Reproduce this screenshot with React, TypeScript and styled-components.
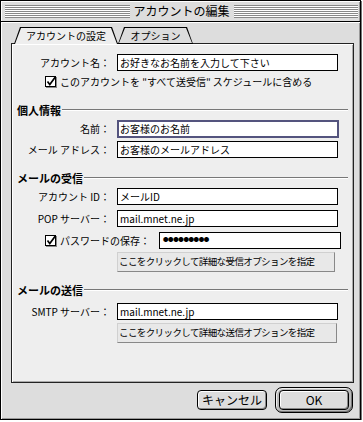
import styled, { createGlobalStyle } from "styled-components";

const GlobalStyle = createGlobalStyle`
  html, body {
    margin: 0;
    padding: 0;
    background: #ffffff;
  }
  body {
    font-family: "Noto Sans CJK JP", "Noto Sans", sans-serif;
    color: #000000;
  }
  * {
    box-sizing: border-box;
  }
`;

function CheckBox() {
    return (
        <svg width="12" height="12" viewBox="0 0 12 12">
            <rect x="1" y="1" width="11" height="11" fill="#888" />
            <rect x="0.5" y="0.5" width="10" height="10" fill="#fff" stroke="#000" />
            <path d="M2.5 5.5 L4.8 8.6 L10.5 0.8" fill="none" stroke="#000" strokeWidth="1.7" />
        </svg>
    );
}

export default function App() {
    return (
        <>
            <GlobalStyle />
            <Window>
                <TitleBar>
                    <Stripes />
                    <Title>アカウントの編集</Title>
                    <Stripes />
                </TitleBar>

                <Body>
                    <TabRow>
                        <Tab $active $w={104}>
                            <TabFace $active>アカウントの設定</TabFace>
                        </Tab>
                        <Tab $w={75}>
                            <TabFace>オプション</TabFace>
                        </Tab>
                    </TabRow>

                    <Panel>
                        <Row $mt={0}>
                            <Label>アカウント名：</Label>
                            <Field $w={221}>お好きなお名前を入力して下さい</Field>
                        </Row>
                        <CheckRow $mt={4}>
                            <CheckBox />
                            <CheckText>このアカウントを "すべて送受信" スケジュールに含める</CheckText>
                        </CheckRow>

                        <Group $mt={16}>
                            <GroupTitle>個人情報</GroupTitle>
                            <GroupLine />
                        </Group>
                        <Row $mt={4}>
                            <Label>名前：</Label>
                            <Field $w={222} $focus>お客様のお名前</Field>
                        </Row>
                        <Row $mt={4}>
                            <Label>メール アドレス：</Label>
                            <Field $w={221}>お客様のメールアドレス</Field>
                        </Row>

                        <Group $mt={14}>
                            <GroupTitle>メールの受信</GroupTitle>
                            <GroupLine />
                        </Group>
                        <Row $mt={4}>
                            <Label>アカウント ID：</Label>
                            <Field $w={221}>メールID</Field>
                        </Row>
                        <Row $mt={5}>
                            <Label>POP サーバー：</Label>
                            <Field $w={221}>mail.mnet.ne.jp</Field>
                        </Row>
                        <CheckRow $mt={5}>
                            <CheckBox />
                            <CheckText $w={96}>パスワードの保存：</CheckText>
                            <Field $w={182}>
                                <Dots>●●●●●●●●●</Dots>
                            </Field>
                        </CheckRow>
                        <OptionButton $mt={3} $w={218}>
                            ここをクリックして詳細な受信オプションを指定
                        </OptionButton>

                        <Group $mt={12}>
                            <GroupTitle>メールの送信</GroupTitle>
                            <GroupLine />
                        </Group>
                        <Row $mt={7}>
                            <Label>SMTP サーバー：</Label>
                            <Field $w={221}>mail.mnet.ne.jp</Field>
                        </Row>
                        <OptionButton $mt={3} $w={220}>
                            ここをクリックして詳細な送信オプションを指定
                        </OptionButton>
                    </Panel>

                    <ButtonRow>
                        <PushButton>キャンセル</PushButton>
                        <DefaultRing>
                            <PushButton>OK</PushButton>
                        </DefaultRing>
                    </ButtonRow>
                </Body>
            </Window>
        </>
    );
}

const Window = styled.div`
    width: 361px;
    height: 420px;
    border: 1px solid #000;
    background: #dddddd;
    box-shadow: 1px 1px 0 #777;
    display: flex;
    flex-direction: column;
`;

const TitleBar = styled.div`
    height: 21px;
    padding: 0 2px 0 4px;
    border-bottom: 1px solid #000;
    background: #dddddd;
    box-shadow: inset 1px 1px 0 #fff, inset -1px 0 0 #999;

    display: flex;
    align-items: center;
    gap: 4px;
`;

const Stripes = styled.div`
    flex: 1;
    height: 13px;
    background: repeating-linear-gradient(to bottom, #888 0 1px, #fff 1px 2px);
`;

const Title = styled.div`
    font-size: 12px;
    line-height: 1;
    white-space: nowrap;
`;

const Body = styled.div`
    flex: 1;
    padding: 5px 6px 5px 10px;
    box-shadow: inset 1px 1px 0 #fff, inset -1px -1px 0 #999;
    display: flex;
    flex-direction: column;
`;

const TabRow = styled.div`
    display: flex;
    padding-left: 3px;
    margin-bottom: -1px;
`;

const tabShape = `polygon(0 100%, 6px 0, calc(100% - 6px) 0, 100% 100%)`;

const Tab = styled.div<{ $active?: boolean; $w: number }>`
    position: relative;
    z-index: ${(p) => (p.$active ? 2 : 1)};
    width: ${(p) => p.$w}px;
    height: 17px;
    padding: ${(p) => (p.$active ? "1px 1px 0" : "1px")};
    background: #000;
    clip-path: ${tabShape};
    display: flex;
`;

const TabFace = styled.div<{ $active?: boolean }>`
    flex: 1;
    background: ${(p) => (p.$active ? "#eeeeee" : "#dcdcdc")};
    clip-path: ${tabShape};

    display: flex;
    align-items: center;
    justify-content: center;

    font-size: 10px;
    line-height: 1;
    white-space: nowrap;
`;

const Panel = styled.div`
    width: 343px;
    height: 340px;
    padding: 10px 5px 0 5px;
    border: 1px solid #222;
    background: #eeeeee;
    box-shadow: inset 1px 1px 0 #fff, inset -1px -1px 0 #aaa;
    display: flex;
    flex-direction: column;
`;

const Row = styled.div<{ $mt: number }>`
    margin-top: ${(p) => p.$mt}px;
    height: 17px;
    display: flex;
    align-items: center;
`;

const Label = styled.div`
    width: 93px;
    margin-right: 7px;
    text-align: right;
    font-size: 10px;
    line-height: 1;
    white-space: nowrap;
`;

const Field = styled.div<{ $w: number; $focus?: boolean }>`
    width: ${(p) => p.$w}px;
    height: ${(p) => (p.$focus ? 18 : 17)}px;
    padding: 0 ${(p) => (p.$focus ? 1 : 2)}px;
    border: ${(p) => (p.$focus ? "2px solid #54547e" : "1px solid #000")};
    background: #fff;

    display: flex;
    align-items: center;

    font-size: 10px;
    line-height: 1;
    white-space: nowrap;
`;

const Dots = styled.span`
    font-size: 5.5px;
    letter-spacing: -0.4px;
    padding-left: 1px;
`;

const CheckRow = styled.div<{ $mt: number }>`
    margin-top: ${(p) => p.$mt}px;
    min-height: 13px;
    padding-left: 28px;
    display: flex;
    align-items: center;
    gap: 3px;
`;

const CheckText = styled.div<{ $w?: number }>`
    width: ${(p) => (p.$w ? `${p.$w}px` : "auto")};
    font-size: 10px;
    line-height: 1;
    white-space: nowrap;
`;

const Group = styled.div<{ $mt: number }>`
    margin-top: ${(p) => p.$mt}px;
    height: 12px;
    display: flex;
    align-items: center;
`;

const GroupTitle = styled.div`
    font-size: 11px;
    font-weight: 700;
    line-height: 1;
    white-space: nowrap;
`;

const GroupLine = styled.div`
    flex: 1;
    margin-left: 1px;
    border-top: 1px solid #777;
    border-bottom: 1px solid #fff;
`;

const OptionButton = styled.div<{ $mt: number; $w: number }>`
    margin-top: ${(p) => p.$mt}px;
    margin-left: 100px;
    width: ${(p) => p.$w}px;
    height: 20px;
    padding-left: 1px;
    border: 1px solid;
    border-color: #d0d0d0 #888 #888 #d0d0d0;
    background: #e8e8e8;

    display: flex;
    align-items: center;

    font-size: 9.5px;
    letter-spacing: -0.6px;
    line-height: 1;
    white-space: nowrap;
`;

const ButtonRow = styled.div`
    width: 343px;
    margin-top: 4px;
    padding-right: 1px;
    display: flex;
    justify-content: flex-end;
    align-items: center;
    gap: 8px;
`;

const PushButton = styled.div`
    width: 70px;
    height: 20px;
    border: 1px solid #000;
    border-radius: 4px;
    background: #dddddd;
    box-shadow: inset 1px 1px 0 #fff, inset -1px -1px 0 #888;

    display: flex;
    align-items: center;
    justify-content: center;

    font-size: 12px;
    line-height: 1;
    white-space: nowrap;
`;

const DefaultRing = styled.div`
    padding: 2px 3px;
    border: 1px solid #000;
    border-radius: 7px;
    background: #bbbbbb;
    box-shadow: inset 1px 1px 0 #eee, inset -1px -1px 0 #777;
`;
